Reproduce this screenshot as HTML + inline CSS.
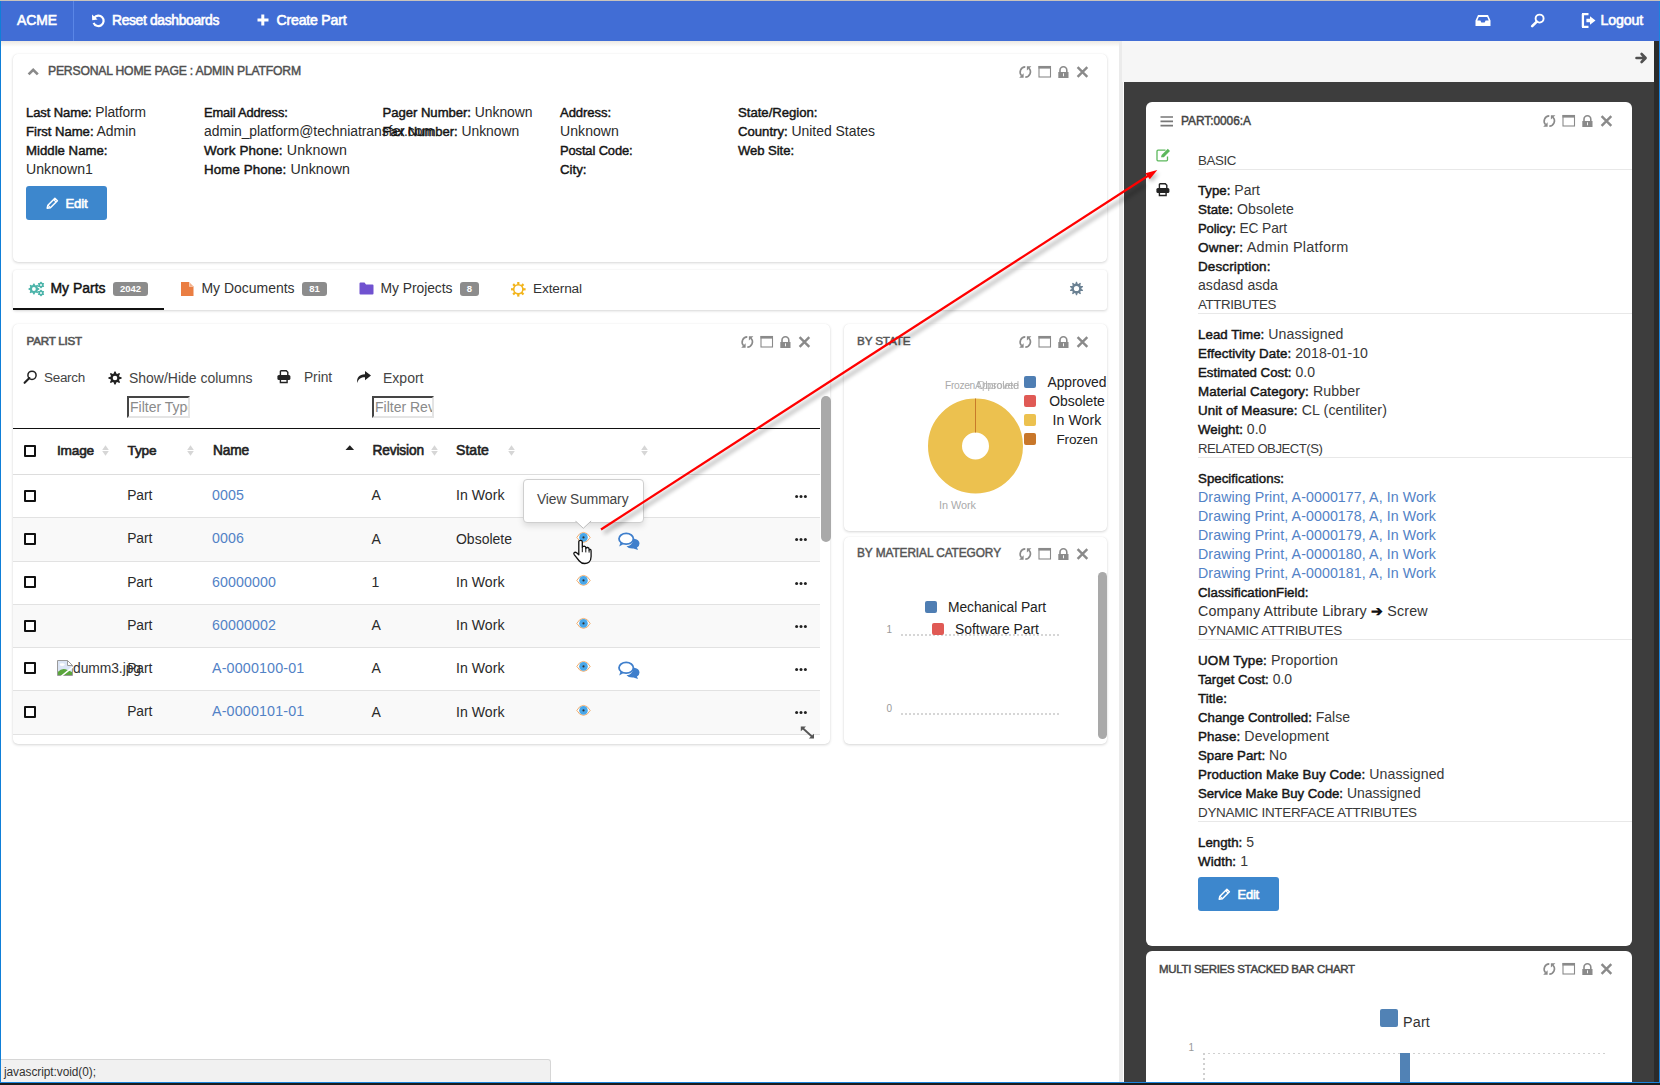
<!DOCTYPE html>
<html><head><meta charset="utf-8"><style>
html,body{margin:0;padding:0;}
body{width:1660px;height:1085px;position:relative;overflow:hidden;background:#fff;font-family:"Liberation Sans",sans-serif;}
.t{position:absolute;white-space:nowrap;line-height:1;font-family:"Liberation Sans",sans-serif;}
.a{position:absolute;}
.card{position:absolute;background:#fff;border-radius:5px;box-shadow:0 1px 3px rgba(0,0,0,0.16),0 0 1px rgba(0,0,0,0.08);}
.cb{position:absolute;width:8px;height:8px;border:2px solid #111;border-radius:1px;background:#fff;}
.row{position:absolute;left:13px;width:807px;border-bottom:1px solid #e2e2e2;}
.badge{position:absolute;background:#8c8c8c;border-radius:3px;color:#fff;font-weight:bold;font-size:9.5px;text-align:center;line-height:14px;height:14px;}
svg{position:absolute;overflow:visible;}
.lb{font-size:13.2px;}

</style></head><body>
<div class="a" style="left:0;top:0;width:1660px;height:1px;background:#c9c3bb"></div><div class="a" style="left:0;top:1px;width:1660px;height:40px;background:#416dd5"></div><div class="a" style="left:73px;top:1px;width:1px;height:40px;background:#5a86e6"></div><div class="a" style="left:0;top:41px;width:1119px;height:6px;background:linear-gradient(#ece9e4,#fff)"></div><div class="a" style="left:1119px;top:41px;width:4px;height:1041px;background:#ebebeb"></div><div class="a" style="left:1122px;top:41px;width:532px;height:41px;background:#f6f6f6"></div><div class="a" style="left:1124px;top:82px;width:530px;height:1000px;background:#3d3d3d"></div><div class="a" style="left:1654px;top:41px;width:5px;height:1041px;background:#2b2b2b"></div><div class="a" style="left:1659px;top:1px;width:1px;height:1082px;background:#1b84dd"></div><div class="a" style="left:0;top:1px;width:1px;height:1082px;background:#0f7fd8"></div><div class="card" style="left:13px;top:54px;width:1094px;height:208px"></div><div class="a" style="left:26px;top:186px;width:81px;height:34px;background:#3d87cd;border-radius:3px"></div><div class="card" style="left:13px;top:270px;width:1094px;height:40px;border-radius:3px"></div><div class="a" style="left:13px;top:308px;width:151px;height:2px;background:#111"></div><div class="badge" style="left:113px;top:282px;width:35px">2042</div><div class="badge" style="left:302px;top:282px;width:25px">81</div><div class="badge" style="left:460px;top:282px;width:19px">8</div><div class="card" style="left:13px;top:324px;width:817px;height:420px"></div><div class="a" style="left:127px;top:396px;width:59px;height:18px;border:2px inset #e4e4e4;border-top-color:#999;border-left-color:#999;background:#fff;overflow:hidden"><span style="position:absolute;left:1px;top:1px;font-size:14px;color:#8a8a8a;white-space:nowrap">Filter Type</span></div><div class="a" style="left:372px;top:396px;width:58px;height:18px;border:2px inset #e4e4e4;border-top-color:#999;border-left-color:#999;background:#fff;overflow:hidden"><span style="position:absolute;left:1px;top:1px;font-size:14px;color:#8a8a8a;white-space:nowrap">Filter Revision</span></div><div class="a" style="left:13px;top:428px;width:807px;height:1px;background:#111"></div><div class="row" style="top:428px;height:46px;border-bottom-color:#ddd"></div><div class="cb" style="left:24px;top:445px"></div><div class="row" style="top:475px;height:42px;background:#fff"></div><div class="cb" style="left:24px;top:490px"></div><div class="row" style="top:518px;height:43px;background:#f9f9f9"></div><div class="cb" style="left:24px;top:533px"></div><div class="row" style="top:562px;height:42px;background:#fff"></div><div class="cb" style="left:24px;top:576px"></div><div class="row" style="top:605px;height:42px;background:#f9f9f9"></div><div class="cb" style="left:24px;top:620px"></div><div class="row" style="top:648px;height:42px;background:#fff"></div><div class="cb" style="left:24px;top:662px"></div><div class="row" style="top:691px;height:43px;background:#f9f9f9"></div><div class="cb" style="left:24px;top:706px"></div><svg style="left:1018.6px;top:66px;" width="70" height="12" viewBox="0 0 70 12"><path d="M6.3,0.9 A5.2,5.2 0 0,0 2.6,9.7" fill="none" stroke="#8a8a8a" stroke-width="1.6"/><path d="M0.2,11.7 L4.6,11.7 L4.6,7.3 Z" fill="#8a8a8a"/><path d="M6.3,11.1 A5.2,5.2 0 0,0 10.0,2.3" fill="none" stroke="#8a8a8a" stroke-width="1.6"/><path d="M7.9,0.2 L12.4,0.2 L7.9,4.6 Z" fill="#8a8a8a"/><rect x="20" y="0.5" width="11.5" height="10.5" fill="none" stroke="#8a8a8a" stroke-width="1.1"/><rect x="19.5" y="0" width="12.5" height="2.6" fill="#8a8a8a"/><path d="M41.0,6.5 V4.2 A3.4,3.4 0 0,1 47.8,4.2 V6.5" fill="none" stroke="#8a8a8a" stroke-width="1.6"/><rect x="39.3" y="6.0" width="10.2" height="6" fill="#8a8a8a"/><rect x="44" y="7.3" width="0.9" height="3" fill="#fff"/><path d="M58.6,1.2 L68.3,10.9 M68.3,1.2 L58.6,10.9" stroke="#8a8a8a" stroke-width="2.4"/></svg><svg style="left:91px;top:13px;" width="15" height="15" viewBox="0 0 15 15"><path d="M3.2,4.8 A5.2,5.2 0 1,1 2.6,9.8" fill="none" stroke="#fff" stroke-width="2.2"/><path d="M1,1.6 L1.2,7.2 L6.6,6.6 Z" fill="#fff"/></svg><svg style="left:257px;top:14px;" width="12" height="12" viewBox="0 0 12 12"><path d="M5.8,0.5 V11.5 M0.5,6 H11.5" stroke="#fff" stroke-width="3"/></svg><svg style="left:1475px;top:14px;" width="17" height="13" viewBox="0 0 17 13"><path d="M3,1 H13 L15.5,6.5 V12 H0.5 V6.5 Z M3.8,3 L2.3,6.5 H5.4 L6.3,8.4 H9.6 L10.6,6.5 H13.7 L12.2,3 Z" fill="#fff" fill-rule="evenodd"/></svg><svg style="left:1530px;top:13px;" width="17" height="16" viewBox="0 0 17 16"><circle cx="9.6" cy="5.6" r="4" fill="none" stroke="#fff" stroke-width="1.9"/><path d="M6.8,8.6 L2.2,13.2" stroke="#fff" stroke-width="2.6" stroke-linecap="round"/></svg><svg style="left:1581px;top:13px;" width="16" height="15" viewBox="0 0 16 15"><path d="M1,1.2 H7.5 M1,13.8 H7.5 M1.9,1 V14" stroke="#fff" stroke-width="2.3" fill="none"/><path d="M5.4,5.8 H9 V3.2 L14.5,7.5 L9,11.8 V9.2 H5.4 Z" fill="#fff"/></svg><svg style="left:1631px;top:51px;" width="17" height="14" viewBox="0 0 17 14"><path d="M5.5,7 H14.5 M10.6,3 L14.6,7 L10.6,11" fill="none" stroke="#505050" stroke-width="2.6" stroke-linecap="round" stroke-linejoin="round"/></svg><svg style="left:27px;top:67px;" width="13" height="9" viewBox="0 0 13 9"><path d="M1.6,7.4 L6.2,2.8 L10.8,7.4" fill="none" stroke="#8a8a8a" stroke-width="2.7"/></svg><svg style="left:46px;top:197px;" width="12" height="12" viewBox="0 0 12 12"><path d="M1.2,11.2 L1.9,8.2 L8.9,1.2 L11.4,3.7 L4.4,10.7 Z" fill="none" stroke="#fff" stroke-width="1.5" stroke-linejoin="round"/><path d="M1.9,8.2 L4.4,10.7 M7.6,2.5 L10.1,5" stroke="#fff" stroke-width="1.1"/><path d="M1.2,11.2 L1.6,9.5 L2.9,10.8 Z" fill="#fff"/></svg><svg style="left:28px;top:280px;" width="18" height="18" viewBox="0 0 18 18"><path d="M5.36,3.53 L6.44,3.53 L7.09,5.08 L7.83,5.38 L9.39,4.75 L10.15,5.51 L9.52,7.07 L9.82,7.81 L11.37,8.46 L11.37,9.54 L9.82,10.19 L9.52,10.93 L10.15,12.49 L9.39,13.25 L7.83,12.62 L7.09,12.92 L6.44,14.47 L5.36,14.47 L4.71,12.92 L3.97,12.62 L2.41,13.25 L1.65,12.49 L2.28,10.93 L1.98,10.19 L0.43,9.54 L0.43,8.46 L1.98,7.81 L2.28,7.07 L1.65,5.51 L2.41,4.75 L3.97,5.38 L4.71,5.08 Z M7.80,9.00 A1.9,1.9 0 1,0 4.00,9.00 A1.9,1.9 0 1,0 7.80,9.00 Z" fill="#4db4aa" fill-rule="evenodd"/><path d="M12.56,1.63 L13.44,1.63 L13.99,2.60 L14.58,2.94 L15.70,2.93 L16.14,3.70 L15.58,4.66 L15.58,5.34 L16.14,6.30 L15.70,7.07 L14.58,7.06 L13.99,7.40 L13.44,8.37 L12.56,8.37 L12.01,7.40 L11.42,7.06 L10.30,7.07 L9.86,6.30 L10.42,5.34 L10.42,4.66 L9.86,3.70 L10.30,2.93 L11.42,2.94 L12.01,2.60 Z M13.95,5.00 A0.95,0.95 0 1,0 12.05,5.00 A0.95,0.95 0 1,0 13.95,5.00 Z" fill="#4db4aa" fill-rule="evenodd"/><path d="M12.56,9.63 L13.44,9.63 L13.99,10.60 L14.58,10.94 L15.70,10.93 L16.14,11.70 L15.58,12.66 L15.58,13.34 L16.14,14.30 L15.70,15.07 L14.58,15.06 L13.99,15.40 L13.44,16.37 L12.56,16.37 L12.01,15.40 L11.42,15.06 L10.30,15.07 L9.86,14.30 L10.42,13.34 L10.42,12.66 L9.86,11.70 L10.30,10.93 L11.42,10.94 L12.01,10.60 Z M13.95,13.00 A0.95,0.95 0 1,0 12.05,13.00 A0.95,0.95 0 1,0 13.95,13.00 Z" fill="#4db4aa" fill-rule="evenodd"/></svg><svg style="left:181px;top:282px;" width="13" height="14" viewBox="0 0 13 14"><path d="M0,0 H8 L12.5,4.5 V14 H0 Z" fill="#ea7e43"/><path d="M8,0 V4.5 H12.5 Z" fill="#fff"/><path d="M8.4,0.6 V4.1 H11.9" fill="#f4b08a"/></svg><svg style="left:358.5px;top:282px;" width="15" height="13" viewBox="0 0 15 13"><path d="M0.5,1.5 Q0.5,0.5 1.5,0.5 H5.5 L7,2.5 H13.5 Q14.5,2.5 14.5,3.5 V11.5 Q14.5,12.5 13.5,12.5 H1.5 Q0.5,12.5 0.5,11.5 Z" fill="#7052d0"/></svg><svg style="left:510.5px;top:281.5px;" width="15" height="15" viewBox="0 0 15 15"><rect x="6.2" y="0" width="2.2" height="2.6" fill="#f2b41b" transform="rotate(0 7.3 7.3)"/><rect x="6.2" y="0" width="2.2" height="2.6" fill="#f2b41b" transform="rotate(45 7.3 7.3)"/><rect x="6.2" y="0" width="2.2" height="2.6" fill="#f2b41b" transform="rotate(90 7.3 7.3)"/><rect x="6.2" y="0" width="2.2" height="2.6" fill="#f2b41b" transform="rotate(135 7.3 7.3)"/><rect x="6.2" y="0" width="2.2" height="2.6" fill="#f2b41b" transform="rotate(180 7.3 7.3)"/><rect x="6.2" y="0" width="2.2" height="2.6" fill="#f2b41b" transform="rotate(225 7.3 7.3)"/><rect x="6.2" y="0" width="2.2" height="2.6" fill="#f2b41b" transform="rotate(270 7.3 7.3)"/><rect x="6.2" y="0" width="2.2" height="2.6" fill="#f2b41b" transform="rotate(315 7.3 7.3)"/><circle cx="7.3" cy="7.3" r="4.6" fill="none" stroke="#f2b41b" stroke-width="1.6"/></svg><svg style="left:1069px;top:281px;" width="15" height="15" viewBox="0 0 15 15"><path d="M6.97,0.72 L8.03,0.72 L8.67,2.64 L9.41,2.88 L11.05,1.70 L11.92,2.33 L11.30,4.25 L11.76,4.89 L13.78,4.90 L14.11,5.91 L12.48,7.11 L12.48,7.89 L14.11,9.09 L13.78,10.10 L11.76,10.11 L11.30,10.75 L11.92,12.67 L11.05,13.30 L9.41,12.12 L8.67,12.36 L8.03,14.28 L6.97,14.28 L6.33,12.36 L5.59,12.12 L3.95,13.30 L3.08,12.67 L3.70,10.75 L3.24,10.11 L1.22,10.10 L0.89,9.09 L2.52,7.89 L2.52,7.11 L0.89,5.91 L1.22,4.90 L3.24,4.89 L3.70,4.25 L3.08,2.33 L3.95,1.70 L5.59,2.88 L6.33,2.64 Z M10.10,7.50 A2.6,2.6 0 1,0 4.90,7.50 A2.6,2.6 0 1,0 10.10,7.50 Z" fill="#6b8193" fill-rule="evenodd"/></svg><svg style="left:741px;top:335.5px;" width="70" height="12" viewBox="0 0 70 12"><path d="M6.3,0.9 A5.2,5.2 0 0,0 2.6,9.7" fill="none" stroke="#8a8a8a" stroke-width="1.6"/><path d="M0.2,11.7 L4.6,11.7 L4.6,7.3 Z" fill="#8a8a8a"/><path d="M6.3,11.1 A5.2,5.2 0 0,0 10.0,2.3" fill="none" stroke="#8a8a8a" stroke-width="1.6"/><path d="M7.9,0.2 L12.4,0.2 L7.9,4.6 Z" fill="#8a8a8a"/><rect x="20" y="0.5" width="11.5" height="10.5" fill="none" stroke="#8a8a8a" stroke-width="1.1"/><rect x="19.5" y="0" width="12.5" height="2.6" fill="#8a8a8a"/><path d="M41.0,6.5 V4.2 A3.4,3.4 0 0,1 47.8,4.2 V6.5" fill="none" stroke="#8a8a8a" stroke-width="1.6"/><rect x="39.3" y="6.0" width="10.2" height="6" fill="#8a8a8a"/><rect x="44" y="7.3" width="0.9" height="3" fill="#fff"/><path d="M58.6,1.2 L68.3,10.9 M68.3,1.2 L58.6,10.9" stroke="#8a8a8a" stroke-width="2.4"/></svg><svg style="left:22px;top:369px;" width="16" height="16" viewBox="0 0 16 16"><circle cx="10" cy="6.3" r="4.1" fill="none" stroke="#222" stroke-width="1.5"/><path d="M7.4,9 L2.6,13.8" stroke="#222" stroke-width="2.1" stroke-linecap="round"/></svg><svg style="left:108px;top:371px;" width="15" height="15" viewBox="0 0 15 15"><path d="M6.35,0.43 L7.65,0.43 L8.34,2.60 L9.17,2.94 L11.19,1.90 L12.10,2.81 L11.06,4.83 L11.40,5.66 L13.57,6.35 L13.57,7.65 L11.40,8.34 L11.06,9.17 L12.10,11.19 L11.19,12.10 L9.17,11.06 L8.34,11.40 L7.65,13.57 L6.35,13.57 L5.66,11.40 L4.83,11.06 L2.81,12.10 L1.90,11.19 L2.94,9.17 L2.60,8.34 L0.43,7.65 L0.43,6.35 L2.60,5.66 L2.94,4.83 L1.90,2.81 L2.81,1.90 L4.83,2.94 L5.66,2.60 Z M9.30,7.00 A2.3,2.3 0 1,0 4.70,7.00 A2.3,2.3 0 1,0 9.30,7.00 Z" fill="#222" fill-rule="evenodd"/></svg><svg style="left:277px;top:370px;" width="15" height="14" viewBox="0 0 15 14"><path d="M3.4,0.8 H9.3 L10.8,2.3 V5" fill="none" stroke="#222" stroke-width="1.4"/><path d="M3.4,0.8 V5" stroke="#222" stroke-width="1.4"/><rect x="0.4" y="5" width="13" height="5" rx="1.5" fill="#222"/><path d="M3.4,9 V12.5 H10.1 V9" fill="none" stroke="#222" stroke-width="1.4"/></svg><svg style="left:356px;top:369px;" width="16" height="15" viewBox="0 0 16 15"><path d="M1.2,14 C0.5,9 3,5.2 9,5.2 V2 L15,6.6 L9,11.2 V8.2 C5.2,8.1 2.6,9.6 1.2,14 Z" fill="#222"/></svg><svg style="left:101.5px;top:445px;" width="7" height="11" viewBox="0 0 7 11"><path d="M3.5,0.3 L6.8,5.1 H0.2 Z M0.2,5.9 H6.8 L3.5,10.7 Z" fill="#d6d6d6"/></svg><svg style="left:186.5px;top:445px;" width="7" height="11" viewBox="0 0 7 11"><path d="M3.5,0.3 L6.8,5.1 H0.2 Z M0.2,5.9 H6.8 L3.5,10.7 Z" fill="#d6d6d6"/></svg><svg style="left:430.5px;top:445px;" width="7" height="11" viewBox="0 0 7 11"><path d="M3.5,0.3 L6.8,5.1 H0.2 Z M0.2,5.9 H6.8 L3.5,10.7 Z" fill="#d6d6d6"/></svg><svg style="left:507.5px;top:445px;" width="7" height="11" viewBox="0 0 7 11"><path d="M3.5,0.3 L6.8,5.1 H0.2 Z M0.2,5.9 H6.8 L3.5,10.7 Z" fill="#d6d6d6"/></svg><svg style="left:640.5px;top:445px;" width="7" height="11" viewBox="0 0 7 11"><path d="M3.5,0.3 L6.8,5.1 H0.2 Z M0.2,5.9 H6.8 L3.5,10.7 Z" fill="#d6d6d6"/></svg><svg style="left:344.5px;top:444.5px;" width="10" height="6" viewBox="0 0 10 6"><path d="M0.5,5 L4.8,0.3 L9.1,5 Z" fill="#222"/></svg><svg style="left:575.5px;top:488.0px;" width="15" height="11" viewBox="0 0 15 11"><path d="M0.8,5.4 Q3.5,0.4 7.5,0.4 Q11.5,0.4 14.2,5.4 Q11.5,10.4 7.5,10.4 Q3.5,10.4 0.8,5.4 Z" fill="#fff" stroke="#f0a45c" stroke-width="0.9"/><circle cx="7.5" cy="5.4" r="4.3" fill="#49a7e9"/><circle cx="7.5" cy="5.4" r="1.1" fill="#333"/></svg><svg style="left:795px;top:494.5px;" width="12" height="4" viewBox="0 0 12 4"><circle cx="1.6" cy="1.6" r="1.5" fill="#222"/><circle cx="6" cy="1.6" r="1.5" fill="#222"/><circle cx="10.4" cy="1.6" r="1.5" fill="#222"/></svg><svg style="left:575.5px;top:531.5px;" width="15" height="11" viewBox="0 0 15 11"><path d="M0.8,5.4 Q3.5,0.4 7.5,0.4 Q11.5,0.4 14.2,5.4 Q11.5,10.4 7.5,10.4 Q3.5,10.4 0.8,5.4 Z" fill="#fff" stroke="#f0a45c" stroke-width="0.9"/><circle cx="7.5" cy="5.4" r="4.3" fill="#49a7e9"/><circle cx="7.5" cy="5.4" r="1.1" fill="#333"/></svg><svg style="left:617.5px;top:531.5px;" width="22" height="19" viewBox="0 0 22 19"><path d="M15.5,6.8 Q21.5,7.5 21.5,11.6 Q21.5,14.2 19,15.6 L20,18 L15.5,16.4 Q10.5,16.8 8.5,14.2 Q14.5,14.2 15.5,6.8 Z" fill="#3f7fcc"/><ellipse cx="8.2" cy="6.8" rx="7.2" ry="5.4" fill="#fff" stroke="#3f7fcc" stroke-width="1.8"/><path d="M2.6,10.2 L1.2,14.6 L6,11.8 Z" fill="#3f7fcc"/></svg><svg style="left:795px;top:538.0px;" width="12" height="4" viewBox="0 0 12 4"><circle cx="1.6" cy="1.6" r="1.5" fill="#222"/><circle cx="6" cy="1.6" r="1.5" fill="#222"/><circle cx="10.4" cy="1.6" r="1.5" fill="#222"/></svg><svg style="left:575.5px;top:575.0px;" width="15" height="11" viewBox="0 0 15 11"><path d="M0.8,5.4 Q3.5,0.4 7.5,0.4 Q11.5,0.4 14.2,5.4 Q11.5,10.4 7.5,10.4 Q3.5,10.4 0.8,5.4 Z" fill="#fff" stroke="#f0a45c" stroke-width="0.9"/><circle cx="7.5" cy="5.4" r="4.3" fill="#49a7e9"/><circle cx="7.5" cy="5.4" r="1.1" fill="#333"/></svg><svg style="left:795px;top:581.5px;" width="12" height="4" viewBox="0 0 12 4"><circle cx="1.6" cy="1.6" r="1.5" fill="#222"/><circle cx="6" cy="1.6" r="1.5" fill="#222"/><circle cx="10.4" cy="1.6" r="1.5" fill="#222"/></svg><svg style="left:575.5px;top:618.0px;" width="15" height="11" viewBox="0 0 15 11"><path d="M0.8,5.4 Q3.5,0.4 7.5,0.4 Q11.5,0.4 14.2,5.4 Q11.5,10.4 7.5,10.4 Q3.5,10.4 0.8,5.4 Z" fill="#fff" stroke="#f0a45c" stroke-width="0.9"/><circle cx="7.5" cy="5.4" r="4.3" fill="#49a7e9"/><circle cx="7.5" cy="5.4" r="1.1" fill="#333"/></svg><svg style="left:795px;top:624.5px;" width="12" height="4" viewBox="0 0 12 4"><circle cx="1.6" cy="1.6" r="1.5" fill="#222"/><circle cx="6" cy="1.6" r="1.5" fill="#222"/><circle cx="10.4" cy="1.6" r="1.5" fill="#222"/></svg><svg style="left:575.5px;top:661.0px;" width="15" height="11" viewBox="0 0 15 11"><path d="M0.8,5.4 Q3.5,0.4 7.5,0.4 Q11.5,0.4 14.2,5.4 Q11.5,10.4 7.5,10.4 Q3.5,10.4 0.8,5.4 Z" fill="#fff" stroke="#f0a45c" stroke-width="0.9"/><circle cx="7.5" cy="5.4" r="4.3" fill="#49a7e9"/><circle cx="7.5" cy="5.4" r="1.1" fill="#333"/></svg><svg style="left:617.5px;top:661.0px;" width="22" height="19" viewBox="0 0 22 19"><path d="M15.5,6.8 Q21.5,7.5 21.5,11.6 Q21.5,14.2 19,15.6 L20,18 L15.5,16.4 Q10.5,16.8 8.5,14.2 Q14.5,14.2 15.5,6.8 Z" fill="#3f7fcc"/><ellipse cx="8.2" cy="6.8" rx="7.2" ry="5.4" fill="#fff" stroke="#3f7fcc" stroke-width="1.8"/><path d="M2.6,10.2 L1.2,14.6 L6,11.8 Z" fill="#3f7fcc"/></svg><svg style="left:795px;top:667.5px;" width="12" height="4" viewBox="0 0 12 4"><circle cx="1.6" cy="1.6" r="1.5" fill="#222"/><circle cx="6" cy="1.6" r="1.5" fill="#222"/><circle cx="10.4" cy="1.6" r="1.5" fill="#222"/></svg><svg style="left:575.5px;top:704.5px;" width="15" height="11" viewBox="0 0 15 11"><path d="M0.8,5.4 Q3.5,0.4 7.5,0.4 Q11.5,0.4 14.2,5.4 Q11.5,10.4 7.5,10.4 Q3.5,10.4 0.8,5.4 Z" fill="#fff" stroke="#f0a45c" stroke-width="0.9"/><circle cx="7.5" cy="5.4" r="4.3" fill="#49a7e9"/><circle cx="7.5" cy="5.4" r="1.1" fill="#333"/></svg><svg style="left:795px;top:711.0px;" width="12" height="4" viewBox="0 0 12 4"><circle cx="1.6" cy="1.6" r="1.5" fill="#222"/><circle cx="6" cy="1.6" r="1.5" fill="#222"/><circle cx="10.4" cy="1.6" r="1.5" fill="#222"/></svg><svg style="left:57px;top:660px;" width="17" height="17" viewBox="0 0 17 17"><path d="M0.5,0.5 H10.5 L15.5,5.5 V15.5 H0.5 Z" fill="#dbe5f5" stroke="#9a9a9a" stroke-width="1"/><path d="M10.5,0.5 V5.5 H15.5 Z" fill="#fff" stroke="#9a9a9a" stroke-width="1"/><ellipse cx="5.2" cy="4.6" rx="2.6" ry="1.3" fill="#fff"/><path d="M1,15 V11.8 Q5,7.5 10.5,10 L15,12 V15 Z" fill="#5aa53c"/><path d="M4,16.5 L16,6.8" stroke="#fff" stroke-width="1.6"/></svg><svg style="left:799.5px;top:725.5px;" width="15" height="13" viewBox="0 0 15 13"><path d="M2,1.5 L13,11.5" stroke="#555" stroke-width="1.8"/><path d="M0.8,0.5 H6 L0.8,5.2 Z M14,12.5 H8.8 L14,7.8 Z" fill="#555"/></svg><div class="a" style="left:820.5px;top:396px;width:10px;height:146px;background:#a9a9a9;border-radius:5px"></div><div class="a" style="left:522.5px;top:478.5px;width:119px;height:42px;background:#fff;border:1px solid #cfcfcf;border-radius:4px;box-shadow:0 3px 6px rgba(0,0,0,0.12)"></div><svg style="left:575px;top:520px;" width="17" height="9" viewBox="0 0 17 9"><path d="M0,0.5 L8.3,8.3 L16.6,0.5" fill="#fff" stroke="#bdbdbd" stroke-width="1"/><rect x="0" y="-1" width="17" height="1.8" fill="#fff"/></svg><div class="card" style="left:844px;top:324px;width:263px;height:207px"></div><svg style="left:1018.6px;top:335.5px;" width="70" height="12" viewBox="0 0 70 12"><path d="M6.3,0.9 A5.2,5.2 0 0,0 2.6,9.7" fill="none" stroke="#8a8a8a" stroke-width="1.6"/><path d="M0.2,11.7 L4.6,11.7 L4.6,7.3 Z" fill="#8a8a8a"/><path d="M6.3,11.1 A5.2,5.2 0 0,0 10.0,2.3" fill="none" stroke="#8a8a8a" stroke-width="1.6"/><path d="M7.9,0.2 L12.4,0.2 L7.9,4.6 Z" fill="#8a8a8a"/><rect x="20" y="0.5" width="11.5" height="10.5" fill="none" stroke="#8a8a8a" stroke-width="1.1"/><rect x="19.5" y="0" width="12.5" height="2.6" fill="#8a8a8a"/><path d="M41.0,6.5 V4.2 A3.4,3.4 0 0,1 47.8,4.2 V6.5" fill="none" stroke="#8a8a8a" stroke-width="1.6"/><rect x="39.3" y="6.0" width="10.2" height="6" fill="#8a8a8a"/><rect x="44" y="7.3" width="0.9" height="3" fill="#fff"/><path d="M58.6,1.2 L68.3,10.9 M68.3,1.2 L58.6,10.9" stroke="#8a8a8a" stroke-width="2.4"/></svg><svg style="left:925px;top:396px;" width="101" height="101" viewBox="0 0 101 101"><circle cx="50.5" cy="50" r="30.5" fill="none" stroke="#ecc14f" stroke-width="34"/><path d="M50.5,2.5 V36.5" stroke="#c87a2a" stroke-width="1"/></svg><div class="a" style="left:1024px;top:376px;width:12px;height:12px;background:#4f7eb3;border-radius:2px"></div><div class="a" style="left:1024px;top:395px;width:12px;height:12px;background:#e05a55;border-radius:2px"></div><div class="a" style="left:1024px;top:414px;width:12px;height:12px;background:#ecc14f;border-radius:2px"></div><div class="a" style="left:1024px;top:433px;width:12px;height:12px;background:#c8772a;border-radius:2px"></div><div class="card" style="left:844px;top:537px;width:263px;height:207px"></div><svg style="left:1018.6px;top:547.5px;" width="70" height="12" viewBox="0 0 70 12"><path d="M6.3,0.9 A5.2,5.2 0 0,0 2.6,9.7" fill="none" stroke="#8a8a8a" stroke-width="1.6"/><path d="M0.2,11.7 L4.6,11.7 L4.6,7.3 Z" fill="#8a8a8a"/><path d="M6.3,11.1 A5.2,5.2 0 0,0 10.0,2.3" fill="none" stroke="#8a8a8a" stroke-width="1.6"/><path d="M7.9,0.2 L12.4,0.2 L7.9,4.6 Z" fill="#8a8a8a"/><rect x="20" y="0.5" width="11.5" height="10.5" fill="none" stroke="#8a8a8a" stroke-width="1.1"/><rect x="19.5" y="0" width="12.5" height="2.6" fill="#8a8a8a"/><path d="M41.0,6.5 V4.2 A3.4,3.4 0 0,1 47.8,4.2 V6.5" fill="none" stroke="#8a8a8a" stroke-width="1.6"/><rect x="39.3" y="6.0" width="10.2" height="6" fill="#8a8a8a"/><rect x="44" y="7.3" width="0.9" height="3" fill="#fff"/><path d="M58.6,1.2 L68.3,10.9 M68.3,1.2 L58.6,10.9" stroke="#8a8a8a" stroke-width="2.4"/></svg><div class="a" style="left:1097.5px;top:572px;width:9px;height:167px;background:#a9a9a9;border-radius:4.5px"></div><div class="a" style="left:901px;top:634px;width:158px;height:2px;background:repeating-linear-gradient(90deg,#d6d6d6 0 2px,transparent 2px 4px)"></div><div class="a" style="left:901px;top:713px;width:158px;height:2px;background:repeating-linear-gradient(90deg,#d6d6d6 0 2px,transparent 2px 4px)"></div><div class="a" style="left:925px;top:601px;width:12px;height:12px;background:#4f7eb3;border-radius:2px"></div><div class="a" style="left:932px;top:623px;width:12px;height:12px;background:#e05a55;border-radius:2px"></div><div class="a" style="left:1146px;top:102px;width:486px;height:844px;background:#fff;border-radius:6px"></div><svg style="left:1159.5px;top:115.5px;" width="14" height="11" viewBox="0 0 14 11"><path d="M0.5,1 H13 M0.5,5.3 H13 M0.5,9.6 H13" stroke="#777" stroke-width="1.7"/></svg><svg style="left:1543px;top:115px;" width="70" height="12" viewBox="0 0 70 12"><path d="M6.3,0.9 A5.2,5.2 0 0,0 2.6,9.7" fill="none" stroke="#8a8a8a" stroke-width="1.6"/><path d="M0.2,11.7 L4.6,11.7 L4.6,7.3 Z" fill="#8a8a8a"/><path d="M6.3,11.1 A5.2,5.2 0 0,0 10.0,2.3" fill="none" stroke="#8a8a8a" stroke-width="1.6"/><path d="M7.9,0.2 L12.4,0.2 L7.9,4.6 Z" fill="#8a8a8a"/><rect x="20" y="0.5" width="11.5" height="10.5" fill="none" stroke="#8a8a8a" stroke-width="1.1"/><rect x="19.5" y="0" width="12.5" height="2.6" fill="#8a8a8a"/><path d="M41.0,6.5 V4.2 A3.4,3.4 0 0,1 47.8,4.2 V6.5" fill="none" stroke="#8a8a8a" stroke-width="1.6"/><rect x="39.3" y="6.0" width="10.2" height="6" fill="#8a8a8a"/><rect x="44" y="7.3" width="0.9" height="3" fill="#fff"/><path d="M58.6,1.2 L68.3,10.9 M68.3,1.2 L58.6,10.9" stroke="#8a8a8a" stroke-width="2.4"/></svg><svg style="left:1155.5px;top:148px;" width="16" height="14" viewBox="0 0 16 14"><path d="M9.5,2.2 H2 Q1,2.2 1,3.2 V11.8 Q1,12.8 2,12.8 H10.5 Q11.5,12.8 11.5,11.8 V8.5" fill="none" stroke="#5cb85c" stroke-width="1.3"/><path d="M5,9.3 L5.6,7 L11.8,0.8 L14,3 L7.8,9.2 Z" fill="#5cb85c"/></svg><svg style="left:1156px;top:183px;" width="15" height="14" viewBox="0 0 15 14"><path d="M3.4,0.8 H9.3 L10.8,2.3 V5" fill="none" stroke="#222" stroke-width="1.4"/><path d="M3.4,0.8 V5" stroke="#222" stroke-width="1.4"/><rect x="0.4" y="5" width="13" height="5" rx="1.5" fill="#222"/><path d="M3.4,9 V12.5 H10.1 V9" fill="none" stroke="#222" stroke-width="1.4"/></svg><div class="a" style="left:1198px;top:169px;width:434px;height:1px;background:#e8e8e8"></div><div class="a" style="left:1198px;top:313.2px;width:434px;height:1px;background:#e8e8e8"></div><div class="a" style="left:1198px;top:457px;width:434px;height:1px;background:#e8e8e8"></div><div class="a" style="left:1198px;top:639px;width:434px;height:1px;background:#e8e8e8"></div><div class="a" style="left:1198px;top:821px;width:434px;height:1px;background:#e8e8e8"></div><div class="a" style="left:1198px;top:877px;width:81px;height:34px;background:#3d87cd;border-radius:3px"></div><svg style="left:1218px;top:888px;" width="12" height="12" viewBox="0 0 12 12"><path d="M1.2,11.2 L1.9,8.2 L8.9,1.2 L11.4,3.7 L4.4,10.7 Z" fill="none" stroke="#fff" stroke-width="1.5" stroke-linejoin="round"/><path d="M1.9,8.2 L4.4,10.7 M7.6,2.5 L10.1,5" stroke="#fff" stroke-width="1.1"/><path d="M1.2,11.2 L1.6,9.5 L2.9,10.8 Z" fill="#fff"/></svg><div class="a" style="left:1146px;top:951px;width:486px;height:140px;background:#fff;border-radius:6px"></div><svg style="left:1543px;top:962.5px;" width="70" height="12" viewBox="0 0 70 12"><path d="M6.3,0.9 A5.2,5.2 0 0,0 2.6,9.7" fill="none" stroke="#8a8a8a" stroke-width="1.6"/><path d="M0.2,11.7 L4.6,11.7 L4.6,7.3 Z" fill="#8a8a8a"/><path d="M6.3,11.1 A5.2,5.2 0 0,0 10.0,2.3" fill="none" stroke="#8a8a8a" stroke-width="1.6"/><path d="M7.9,0.2 L12.4,0.2 L7.9,4.6 Z" fill="#8a8a8a"/><rect x="20" y="0.5" width="11.5" height="10.5" fill="none" stroke="#8a8a8a" stroke-width="1.1"/><rect x="19.5" y="0" width="12.5" height="2.6" fill="#8a8a8a"/><path d="M41.0,6.5 V4.2 A3.4,3.4 0 0,1 47.8,4.2 V6.5" fill="none" stroke="#8a8a8a" stroke-width="1.6"/><rect x="39.3" y="6.0" width="10.2" height="6" fill="#8a8a8a"/><rect x="44" y="7.3" width="0.9" height="3" fill="#fff"/><path d="M58.6,1.2 L68.3,10.9 M68.3,1.2 L58.6,10.9" stroke="#8a8a8a" stroke-width="2.4"/></svg><div class="a" style="left:1380px;top:1009px;width:18px;height:18px;background:#5182b5;border-radius:2px"></div><div class="a" style="left:1203px;top:1052.5px;width:402px;height:1.5px;background:repeating-linear-gradient(90deg,#d0d0d0 0 2px,transparent 2px 5px)"></div><div class="a" style="left:1203px;top:1052.5px;width:1.5px;height:40px;background:repeating-linear-gradient(180deg,#d0d0d0 0 2px,transparent 2px 5px)"></div><div class="a" style="left:1400px;top:1053px;width:10px;height:40px;background:#5182b5"></div><div class="a" style="left:1px;top:1059px;width:549px;height:23px;background:#f1f1f1;border-top:1px solid #d6d6d6;border-right:1px solid #d6d6d6;border-top-right-radius:3px"></div><div class="a" style="left:0;top:1082px;width:1660px;height:1px;background:#1b84dd"></div><div class="a" style="left:0;top:1083px;width:1660px;height:2px;background:#1c1c1c"></div>
<div class="t" style="left:17px;top:14px;font-size:13.92px;font-weight:normal;-webkit-text-stroke:0.6px #fff;color:#fff;letter-spacing:-0.056px;">ACME</div>
<div class="t" style="left:112px;top:14px;font-size:13.83px;font-weight:normal;-webkit-text-stroke:0.6px #fff;color:#fff;letter-spacing:-0.326px;">Reset dashboards</div>
<div class="t" style="left:276.5px;top:13px;font-size:14.09px;font-weight:normal;-webkit-text-stroke:0.6px #fff;color:#fff;letter-spacing:-0.186px;">Create Part</div>
<div class="t" style="left:1600.5px;top:13px;font-size:14.19px;font-weight:normal;-webkit-text-stroke:0.6px #fff;color:#fff;letter-spacing:-0.153px;">Logout</div>
<div class="t" style="left:48px;top:65px;font-size:12.18px;font-weight:normal;-webkit-text-stroke:0.45px #505050;color:#505050;letter-spacing:-0.190px;">PERSONAL HOME PAGE : ADMIN PLATFORM</div>
<div class="t" style="left:26px;top:106px;font-size:13.80px;font-weight:normal;color:#2a2a2a;letter-spacing:-0.090px;"><span class="lb" style="font-size:13.01px;color:#151515;-webkit-text-stroke:0.45px #151515">Last Name:</span> Platform</div>
<div class="t" style="left:26px;top:125px;font-size:13.94px;font-weight:normal;color:#2a2a2a;letter-spacing:-0.028px;"><span class="lb" style="font-size:13.14px;color:#151515;-webkit-text-stroke:0.45px #151515">First Name:</span> Admin</div>
<div class="t" style="left:26px;top:143px;font-size:14.01px;font-weight:normal;color:#2a2a2a;letter-spacing:0.006px;"><span class="lb" style="font-size:13.21px;color:#151515;-webkit-text-stroke:0.45px #151515">Middle Name:</span></div>
<div class="t" style="left:26px;top:162px;font-size:14.09px;font-weight:normal;color:#2a2a2a;letter-spacing:0.053px;">Unknown1</div>
<div class="t" style="left:204px;top:106px;font-size:13.64px;font-weight:normal;color:#2a2a2a;letter-spacing:-0.157px;"><span class="lb" style="font-size:12.86px;color:#151515;-webkit-text-stroke:0.45px #151515">Email Address:</span></div>
<div class="t" style="left:204px;top:125px;font-size:13.91px;font-weight:normal;color:#2a2a2a;letter-spacing:-0.042px;">admin_platform@techniatransfer.com</div>
<div class="t" style="left:204px;top:143px;font-size:14.24px;font-weight:normal;color:#2a2a2a;letter-spacing:0.126px;"><span class="lb" style="font-size:13.42px;color:#151515;-webkit-text-stroke:0.45px #151515">Work Phone:</span> Unknown</div>
<div class="t" style="left:204px;top:162px;font-size:14.15px;font-weight:normal;color:#2a2a2a;letter-spacing:0.082px;"><span class="lb" style="font-size:13.34px;color:#151515;-webkit-text-stroke:0.45px #151515">Home Phone:</span> Unknown</div>
<div class="t" style="left:382.5px;top:106px;font-size:13.92px;font-weight:normal;color:#2a2a2a;letter-spacing:-0.040px;"><span class="lb" style="font-size:13.13px;color:#151515;-webkit-text-stroke:0.45px #151515">Pager Number:</span> Unknown</div>
<div class="t" style="left:382.5px;top:125px;font-size:13.90px;font-weight:normal;color:#2a2a2a;letter-spacing:-0.052px;"><span class="lb" style="font-size:13.11px;color:#151515;-webkit-text-stroke:0.45px #151515">Fax Number:</span> Unknown</div>
<div class="t" style="left:560px;top:106px;font-size:13.86px;font-weight:normal;color:#2a2a2a;letter-spacing:-0.065px;"><span class="lb" style="font-size:13.07px;color:#151515;-webkit-text-stroke:0.45px #151515">Address:</span></div>
<div class="t" style="left:560px;top:124px;font-size:14.07px;font-weight:normal;color:#2a2a2a;letter-spacing:0.045px;">Unknown</div>
<div class="t" style="left:560px;top:144px;font-size:13.72px;font-weight:normal;color:#2a2a2a;letter-spacing:-0.124px;"><span class="lb" style="font-size:12.93px;color:#151515;-webkit-text-stroke:0.45px #151515">Postal Code:</span></div>
<div class="t" style="left:560px;top:162px;font-size:14.03px;font-weight:normal;color:#2a2a2a;letter-spacing:0.013px;"><span class="lb" style="font-size:13.23px;color:#151515;-webkit-text-stroke:0.45px #151515">City:</span></div>
<div class="t" style="left:738px;top:106px;font-size:13.96px;font-weight:normal;color:#2a2a2a;letter-spacing:-0.016px;"><span class="lb" style="font-size:13.17px;color:#151515;-webkit-text-stroke:0.45px #151515">State/Region:</span></div>
<div class="t" style="left:738px;top:125px;font-size:13.96px;font-weight:normal;color:#2a2a2a;letter-spacing:-0.018px;"><span class="lb" style="font-size:13.16px;color:#151515;-webkit-text-stroke:0.45px #151515">Country:</span> United States</div>
<div class="t" style="left:738px;top:144px;font-size:13.88px;font-weight:normal;color:#2a2a2a;letter-spacing:-0.052px;"><span class="lb" style="font-size:13.09px;color:#151515;-webkit-text-stroke:0.45px #151515">Web Site:</span></div>
<div class="t" style="left:65.5px;top:197px;font-size:13.13px;font-weight:normal;-webkit-text-stroke:0.6px #fff;color:#fff;letter-spacing:-0.156px;">Edit</div>
<div class="t" style="left:50.5px;top:282px;font-size:13.97px;font-weight:normal;-webkit-text-stroke:0.45px #111;color:#111;letter-spacing:-0.015px;">My Parts</div>
<div class="t" style="left:201.5px;top:282px;font-size:13.97px;font-weight:normal;color:#333;letter-spacing:-0.015px;">My Documents</div>
<div class="t" style="left:380.5px;top:282px;font-size:13.89px;font-weight:normal;color:#333;letter-spacing:-0.051px;">My Projects</div>
<div class="t" style="left:533px;top:282px;font-size:13.67px;font-weight:normal;color:#333;letter-spacing:-0.146px;">External</div>
<div class="t" style="left:26.5px;top:335px;font-size:11.60px;font-weight:normal;-webkit-text-stroke:0.6px #555;color:#555;letter-spacing:-0.211px;">PART LIST</div>
<div class="t" style="left:44px;top:371px;font-size:13.46px;font-weight:normal;color:#444;letter-spacing:-0.274px;">Search</div>
<div class="t" style="left:129px;top:371px;font-size:13.99px;font-weight:normal;color:#444;letter-spacing:-0.007px;">Show/Hide columns</div>
<div class="t" style="left:304px;top:371px;font-size:13.80px;font-weight:normal;color:#444;letter-spacing:-0.079px;">Print</div>
<div class="t" style="left:383px;top:371px;font-size:14.01px;font-weight:normal;color:#444;letter-spacing:0.003px;">Export</div>
<div class="t" style="left:57px;top:444px;font-size:13.65px;font-weight:normal;-webkit-text-stroke:0.6px #222;color:#222;letter-spacing:-0.190px;">Image</div>
<div class="t" style="left:127.5px;top:444px;font-size:13.68px;font-weight:normal;-webkit-text-stroke:0.6px #222;color:#222;letter-spacing:-0.168px;">Type</div>
<div class="t" style="left:213px;top:444px;font-size:13.74px;font-weight:normal;-webkit-text-stroke:0.6px #222;color:#222;letter-spacing:-0.168px;">Name</div>
<div class="t" style="left:372.5px;top:444px;font-size:13.71px;font-weight:normal;-webkit-text-stroke:0.6px #222;color:#222;letter-spacing:-0.136px;">Revision</div>
<div class="t" style="left:456px;top:443px;font-size:14.06px;font-weight:normal;-webkit-text-stroke:0.6px #222;color:#222;letter-spacing:0.030px;">State</div>
<div class="t" style="left:127.2px;top:489px;font-size:13.81px;font-weight:normal;color:#2a2a2a;letter-spacing:-0.085px;">Part</div>
<div class="t" style="left:212px;top:488px;font-size:14.19px;font-weight:normal;color:#5282c6;letter-spacing:0.106px;">0005</div>
<div class="t" style="left:371.6px;top:488px;font-size:14.00px;font-weight:normal;color:#2a2a2a;">A</div>
<div class="t" style="left:456px;top:488px;font-size:14.08px;font-weight:normal;color:#2a2a2a;letter-spacing:0.037px;">In Work</div>
<div class="t" style="left:127.2px;top:532px;font-size:13.81px;font-weight:normal;color:#2a2a2a;letter-spacing:-0.085px;">Part</div>
<div class="t" style="left:212px;top:531px;font-size:14.19px;font-weight:normal;color:#5282c6;letter-spacing:0.106px;">0006</div>
<div class="t" style="left:371.6px;top:532px;font-size:14.00px;font-weight:normal;color:#2a2a2a;">A</div>
<div class="t" style="left:456px;top:532px;font-size:13.99px;font-weight:normal;color:#2a2a2a;letter-spacing:-0.003px;">Obsolete</div>
<div class="t" style="left:127.2px;top:576px;font-size:13.81px;font-weight:normal;color:#2a2a2a;letter-spacing:-0.085px;">Part</div>
<div class="t" style="left:212px;top:575px;font-size:14.19px;font-weight:normal;color:#5282c6;letter-spacing:0.107px;">60000000</div>
<div class="t" style="left:371.6px;top:575px;font-size:14.00px;font-weight:normal;color:#2a2a2a;">1</div>
<div class="t" style="left:456px;top:575px;font-size:14.08px;font-weight:normal;color:#2a2a2a;letter-spacing:0.037px;">In Work</div>
<div class="t" style="left:127.2px;top:619px;font-size:13.81px;font-weight:normal;color:#2a2a2a;letter-spacing:-0.085px;">Part</div>
<div class="t" style="left:212px;top:618px;font-size:14.19px;font-weight:normal;color:#5282c6;letter-spacing:0.107px;">60000002</div>
<div class="t" style="left:371.6px;top:618px;font-size:14.00px;font-weight:normal;color:#2a2a2a;">A</div>
<div class="t" style="left:456px;top:618px;font-size:14.08px;font-weight:normal;color:#2a2a2a;letter-spacing:0.037px;">In Work</div>
<div class="t" style="left:127.2px;top:662px;font-size:13.81px;font-weight:normal;color:#2a2a2a;letter-spacing:-0.085px;">Part</div>
<div class="t" style="left:212px;top:661px;font-size:14.29px;font-weight:normal;color:#5282c6;letter-spacing:0.158px;">A-0000100-01</div>
<div class="t" style="left:371.6px;top:661px;font-size:14.00px;font-weight:normal;color:#2a2a2a;">A</div>
<div class="t" style="left:456px;top:661px;font-size:14.08px;font-weight:normal;color:#2a2a2a;letter-spacing:0.037px;">In Work</div>
<div class="t" style="left:127.2px;top:705px;font-size:13.81px;font-weight:normal;color:#2a2a2a;letter-spacing:-0.085px;">Part</div>
<div class="t" style="left:212px;top:704px;font-size:14.29px;font-weight:normal;color:#5282c6;letter-spacing:0.158px;">A-0000101-01</div>
<div class="t" style="left:371.6px;top:705px;font-size:14.00px;font-weight:normal;color:#2a2a2a;">A</div>
<div class="t" style="left:456px;top:705px;font-size:14.08px;font-weight:normal;color:#2a2a2a;letter-spacing:0.037px;">In Work</div>
<div class="t" style="left:73px;top:662px;font-size:13.87px;font-weight:normal;color:#333;letter-spacing:-0.070px;">dumm3.jpg</div>
<div class="t" style="left:537px;top:493px;font-size:13.82px;font-weight:normal;color:#444;letter-spacing:-0.099px;">View Summary</div>
<div class="t" style="left:857px;top:335px;font-size:11.73px;font-weight:normal;-webkit-text-stroke:0.45px #555;color:#555;letter-spacing:-0.155px;">BY STATE</div>
<div class="t" style="left:945px;top:381px;font-size:10.29px;font-weight:normal;color:#aaa;letter-spacing:-0.342px;">Frozen</div>
<div class="t" style="left:975px;top:380px;font-size:10.63px;font-weight:normal;color:#aaa;letter-spacing:-0.190px;opacity:0.85;">Approved</div>
<div class="t" style="left:977px;top:380px;font-size:10.74px;font-weight:normal;color:#aaa;letter-spacing:-0.125px;opacity:0.85;">Obsolete</div>
<div class="t" style="left:939px;top:500px;font-size:10.90px;font-weight:normal;color:#aaa;letter-spacing:-0.050px;">In Work</div>
<div class="t" style="left:1047.5px;top:376px;font-size:13.89px;font-weight:normal;color:#222;letter-spacing:-0.058px;">Approved</div>
<div class="t" style="left:1049.15px;top:395px;font-size:13.96px;font-weight:normal;color:#222;letter-spacing:-0.022px;">Obsolete</div>
<div class="t" style="left:1052.5px;top:413px;font-size:14.15px;font-weight:normal;color:#222;letter-spacing:0.073px;">In Work</div>
<div class="t" style="left:1056.5px;top:433px;font-size:13.58px;font-weight:normal;color:#222;letter-spacing:-0.212px;">Frozen</div>
<div class="t" style="left:857px;top:548px;font-size:11.86px;font-weight:normal;-webkit-text-stroke:0.45px #555;color:#555;letter-spacing:-0.084px;">BY MATERIAL CATEGORY</div>
<div class="t" style="left:886.5px;top:625px;font-size:10.00px;font-weight:normal;color:#999;">1</div>
<div class="t" style="left:886.5px;top:704px;font-size:10.00px;font-weight:normal;color:#999;">0</div>
<div class="t" style="left:948px;top:601px;font-size:13.83px;font-weight:normal;color:#222;letter-spacing:-0.079px;">Mechanical Part</div>
<div class="t" style="left:955px;top:623px;font-size:13.93px;font-weight:normal;color:#222;letter-spacing:-0.032px;">Software Part</div>
<div class="t" style="left:1181px;top:116px;font-size:11.92px;font-weight:normal;-webkit-text-stroke:0.45px #444;color:#444;letter-spacing:-0.042px;">PART:0006:A</div>
<div class="t" style="left:1198px;top:154px;font-size:13.31px;font-weight:normal;color:#3a3a3a;letter-spacing:-0.391px;">BASIC</div>
<div class="t" style="left:1198px;top:183px;font-size:14.02px;font-weight:normal;color:#444;letter-spacing:0.008px;"><span class="lb" style="font-size:13.22px;color:#151515;-webkit-text-stroke:0.45px #151515">Type:</span> <span style="color:#383838">Part</span></div>
<div class="t" style="left:1198px;top:202px;font-size:14.12px;font-weight:normal;color:#444;letter-spacing:0.053px;"><span class="lb" style="font-size:13.31px;color:#151515;-webkit-text-stroke:0.45px #151515">State:</span> <span style="color:#383838">Obsolete</span></div>
<div class="t" style="left:1198px;top:222px;font-size:13.79px;font-weight:normal;color:#444;letter-spacing:-0.091px;"><span class="lb" style="font-size:13.00px;color:#151515;-webkit-text-stroke:0.45px #151515">Policy:</span> <span style="color:#383838">EC Part</span></div>
<div class="t" style="left:1198px;top:240px;font-size:14.45px;font-weight:normal;color:#444;letter-spacing:0.221px;"><span class="lb" style="font-size:13.62px;color:#151515;-webkit-text-stroke:0.45px #151515">Owner:</span> <span style="color:#383838">Admin Platform</span></div>
<div class="t" style="left:1198px;top:259px;font-size:14.28px;font-weight:normal;color:#444;letter-spacing:0.120px;"><span class="lb" style="font-size:13.47px;color:#151515;-webkit-text-stroke:0.45px #151515">Description:</span></div>
<div class="t" style="left:1198px;top:278px;font-size:14.05px;font-weight:normal;color:#383838;letter-spacing:0.027px;">asdasd asda</div>
<div class="t" style="left:1198px;top:298px;font-size:13.33px;font-weight:normal;color:#3a3a3a;letter-spacing:-0.394px;">ATTRIBUTES</div>
<div class="t" style="left:1198px;top:327px;font-size:14.12px;font-weight:normal;color:#444;letter-spacing:0.058px;"><span class="lb" style="font-size:13.31px;color:#151515;-webkit-text-stroke:0.45px #151515">Lead Time:</span> <span style="color:#383838">Unassigned</span></div>
<div class="t" style="left:1198px;top:346px;font-size:14.13px;font-weight:normal;color:#444;letter-spacing:0.056px;"><span class="lb" style="font-size:13.32px;color:#151515;-webkit-text-stroke:0.45px #151515">Effectivity Date:</span> <span style="color:#383838">2018-01-10</span></div>
<div class="t" style="left:1198px;top:365px;font-size:14.03px;font-weight:normal;color:#444;letter-spacing:0.014px;"><span class="lb" style="font-size:13.23px;color:#151515;-webkit-text-stroke:0.45px #151515">Estimated Cost:</span> <span style="color:#383838">0.0</span></div>
<div class="t" style="left:1198px;top:384px;font-size:14.20px;font-weight:normal;color:#444;letter-spacing:0.089px;"><span class="lb" style="font-size:13.38px;color:#151515;-webkit-text-stroke:0.45px #151515">Material Category:</span> <span style="color:#383838">Rubber</span></div>
<div class="t" style="left:1198px;top:403px;font-size:14.21px;font-weight:normal;color:#444;letter-spacing:0.089px;"><span class="lb" style="font-size:13.40px;color:#151515;-webkit-text-stroke:0.45px #151515">Unit of Measure:</span> <span style="color:#383838">CL (centiliter)</span></div>
<div class="t" style="left:1198px;top:422px;font-size:14.07px;font-weight:normal;color:#444;letter-spacing:0.030px;"><span class="lb" style="font-size:13.26px;color:#151515;-webkit-text-stroke:0.45px #151515">Weight:</span> <span style="color:#383838">0.0</span></div>
<div class="t" style="left:1198px;top:442px;font-size:13.14px;font-weight:normal;color:#3a3a3a;letter-spacing:-0.479px;">RELATED OBJECT(S)</div>
<div class="t" style="left:1198px;top:471px;font-size:14.08px;font-weight:normal;color:#444;letter-spacing:0.032px;"><span class="lb" style="font-size:13.27px;color:#151515;-webkit-text-stroke:0.45px #151515">Specifications:</span></div>
<div class="t" style="left:1198px;top:490px;font-size:14.19px;font-weight:normal;color:#5282c6;letter-spacing:0.089px;">Drawing Print, A-0000177, A, In Work</div>
<div class="t" style="left:1198px;top:509px;font-size:14.19px;font-weight:normal;color:#5282c6;letter-spacing:0.089px;">Drawing Print, A-0000178, A, In Work</div>
<div class="t" style="left:1198px;top:528px;font-size:14.19px;font-weight:normal;color:#5282c6;letter-spacing:0.089px;">Drawing Print, A-0000179, A, In Work</div>
<div class="t" style="left:1198px;top:547px;font-size:14.19px;font-weight:normal;color:#5282c6;letter-spacing:0.089px;">Drawing Print, A-0000180, A, In Work</div>
<div class="t" style="left:1198px;top:566px;font-size:14.19px;font-weight:normal;color:#5282c6;letter-spacing:0.089px;">Drawing Print, A-0000181, A, In Work</div>
<div class="t" style="left:1198px;top:585px;font-size:14.04px;font-weight:normal;color:#444;letter-spacing:0.014px;"><span class="lb" style="font-size:13.23px;color:#151515;-webkit-text-stroke:0.45px #151515">ClassificationField:</span></div>
<div class="t" style="left:1198px;top:604px;font-size:14.30px;font-weight:normal;color:#333;letter-spacing:0.145px;">Company Attribute Library <b style="color:#111">&#10132;</b> Screw</div>
<div class="t" style="left:1198px;top:624px;font-size:13.55px;font-weight:normal;color:#3a3a3a;letter-spacing:-0.267px;">DYNAMIC ATTRIBUTES</div>
<div class="t" style="left:1198px;top:653px;font-size:14.26px;font-weight:normal;color:#444;letter-spacing:0.128px;"><span class="lb" style="font-size:13.45px;color:#151515;-webkit-text-stroke:0.45px #151515">UOM Type:</span> <span style="color:#383838">Proportion</span></div>
<div class="t" style="left:1198px;top:673px;font-size:13.97px;font-weight:normal;color:#444;letter-spacing:-0.015px;"><span class="lb" style="font-size:13.17px;color:#151515;-webkit-text-stroke:0.45px #151515">Target Cost:</span> <span style="color:#383838">0.0</span></div>
<div class="t" style="left:1198px;top:691px;font-size:14.22px;font-weight:normal;color:#444;letter-spacing:0.076px;"><span class="lb" style="font-size:13.41px;color:#151515;-webkit-text-stroke:0.45px #151515">Title:</span></div>
<div class="t" style="left:1198px;top:710px;font-size:14.01px;font-weight:normal;color:#444;letter-spacing:0.005px;"><span class="lb" style="font-size:13.21px;color:#151515;-webkit-text-stroke:0.45px #151515">Change Controlled:</span> <span style="color:#383838">False</span></div>
<div class="t" style="left:1198px;top:729px;font-size:14.19px;font-weight:normal;color:#444;letter-spacing:0.099px;"><span class="lb" style="font-size:13.38px;color:#151515;-webkit-text-stroke:0.45px #151515">Phase:</span> <span style="color:#383838">Development</span></div>
<div class="t" style="left:1198px;top:748px;font-size:14.04px;font-weight:normal;color:#444;letter-spacing:0.017px;"><span class="lb" style="font-size:13.24px;color:#151515;-webkit-text-stroke:0.45px #151515">Spare Part:</span> <span style="color:#383838">No</span></div>
<div class="t" style="left:1198px;top:767px;font-size:14.13px;font-weight:normal;color:#444;letter-spacing:0.062px;"><span class="lb" style="font-size:13.32px;color:#151515;-webkit-text-stroke:0.45px #151515">Production Make Buy Code:</span> <span style="color:#383838">Unassigned</span></div>
<div class="t" style="left:1198px;top:786px;font-size:13.99px;font-weight:normal;color:#444;letter-spacing:-0.007px;"><span class="lb" style="font-size:13.19px;color:#151515;-webkit-text-stroke:0.45px #151515">Service Make Buy Code:</span> <span style="color:#383838">Unassigned</span></div>
<div class="t" style="left:1198px;top:806px;font-size:13.48px;font-weight:normal;color:#3a3a3a;letter-spacing:-0.302px;">DYNAMIC INTERFACE ATTRIBUTES</div>
<div class="t" style="left:1198px;top:835px;font-size:14.04px;font-weight:normal;color:#444;letter-spacing:0.017px;"><span class="lb" style="font-size:13.24px;color:#151515;-webkit-text-stroke:0.45px #151515">Length:</span> <span style="color:#383838">5</span></div>
<div class="t" style="left:1198px;top:854px;font-size:14.13px;font-weight:normal;color:#444;letter-spacing:0.059px;"><span class="lb" style="font-size:13.33px;color:#151515;-webkit-text-stroke:0.45px #151515">Width:</span> <span style="color:#383838">1</span></div>
<div class="t" style="left:1237.5px;top:888px;font-size:12.98px;font-weight:normal;-webkit-text-stroke:0.6px #fff;color:#fff;letter-spacing:-0.216px;">Edit</div>
<div class="t" style="left:1159px;top:964px;font-size:11.48px;font-weight:normal;-webkit-text-stroke:0.45px #444;color:#444;letter-spacing:-0.294px;">MULTI SERIES STACKED BAR CHART</div>
<div class="t" style="left:1403px;top:1015px;font-size:14.35px;font-weight:normal;color:#333;letter-spacing:0.166px;">Part</div>
<div class="t" style="left:1188.5px;top:1043px;font-size:10.00px;font-weight:normal;color:#999;">1</div>
<div class="t" style="left:4px;top:1067px;font-size:11.87px;font-weight:normal;color:#333;letter-spacing:-0.053px;">javascript:void(0);</div>

<svg style="left:0;top:0" width="1660" height="1085" viewBox="0 0 1660 1085">
<defs><filter id="sh" x="-10%" y="-10%" width="120%" height="130%"><feGaussianBlur stdDeviation="2"/></filter></defs>
<g filter="url(#sh)" opacity="0.3"><path d="M604,533 L1145,185" stroke="#000" stroke-width="3"/><path d="M1159,173 L1147.3,176.2 L1151.8,182 Z" fill="#000"/></g>
<path d="M601,529.5 L1148.5,175.5" stroke="#ff0000" stroke-width="2.2"/>
<path d="M1157.3,170 L1145.3,173.3 L1149.8,179.2 Z" fill="#ff0000"/>
<g transform="translate(573.3,540)"><path d="M5.5,1.8 Q5.5,0.3 7.2,0.3 Q9,0.3 9,1.8 V7.3 Q9.2,6.2 10.9,6.2 Q12.4,6.4 12.5,7.8 V8.5 Q12.8,7.4 14.3,7.5 Q15.8,7.7 15.8,9.2 V10 Q16.2,9.2 17,9.4 Q17.8,9.7 17.8,11 V16.5 Q17.8,20.5 15.6,22.2 Q14,23.5 11.5,23.5 Q8,23.5 6,21 L0.9,14.6 Q0.1,13.4 1,12.6 Q2,11.8 3.3,12.8 L5.5,14.8 Z" fill="#fff" stroke="#111" stroke-width="1.3" stroke-linejoin="round"/><path d="M9,7.3 V12.2 M12.5,8.5 V12.4 M15.8,10 V12.6" stroke="#111" stroke-width="1"/></g>
</svg>

</body></html>
